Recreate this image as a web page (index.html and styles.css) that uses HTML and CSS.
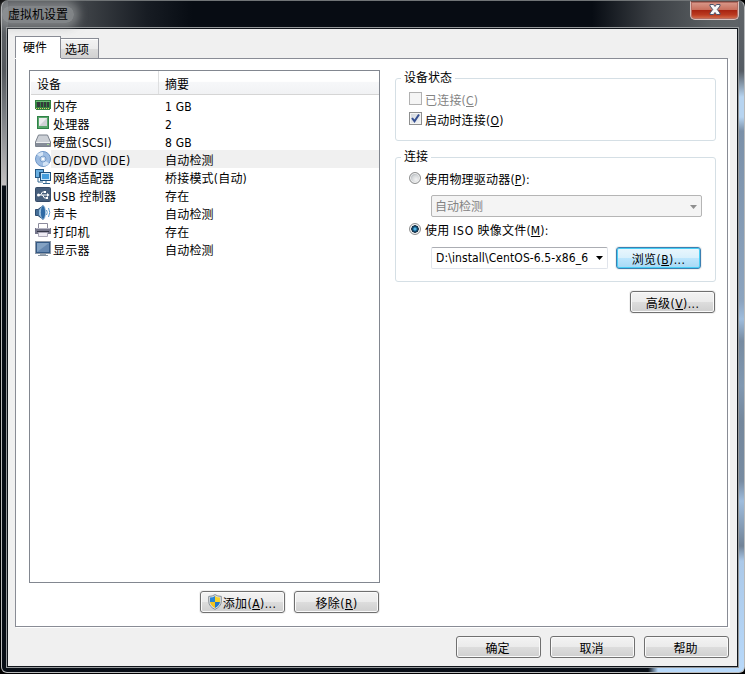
FILE: index.html
```html
<!DOCTYPE html>
<html lang="zh-CN">
<head>
<meta charset="utf-8">
<title>虚拟机设置</title>
<link rel="stylesheet" href="styles.css">
</head>
<body>
<div class="window">
  <header class="titlebar">
    <h1 class="title">虚拟机设置</h1>
    <button class="close" aria-label="关闭"><svg width="14" height="11" viewBox="0 0 14 11"><path d="M2 .5h3.500L7 2.500l1.500-2H12V2L9.300 5.500 12 9v1.500H8.500L7 8.500l-1.500 2H2V9l2.700-3.500L2 2z" fill="#f8f8f8" stroke="#4c5268" stroke-width="1"/></svg></button>
  </header>
  <main class="client">
    <nav class="tabs">
      <span class="tab active">硬件</span><span class="tab">选项</span>
    </nav>
    <section class="panel">
      <div class="hardware">
        <div class="list">
          <div class="list-head"><span class="col-name">设备</span><span class="col-sum">摘要</span></div>
          <div class="rows">
            <div class="row"><svg class="icon" viewBox="0 0 16 16"><path d="M0 3h16v9h-1v1H1v-1H0z" fill="#348342"/><path d="M1 4h14v1H1z" fill="#70ba79"/><path d="M2 5h3v5H2zm4 0h2v5H6zm3 0h2v5H9zm3 0h2v5h-2z" fill="#343a3a"/><path d="M1 11.5h14" stroke="#e1d36b" stroke-dasharray="1 1"/></svg><span class="name">内存</span><span class="sum">1 GB</span></div>
            <div class="row"><svg class="icon" viewBox="0 0 16 16"><path d="M2 1h12v13H2z" fill="#2f8247"/><path d="M3 2h10v11H3z" fill="#58a66b"/><path d="M4 3h8v8H4z" fill="#ececef"/><path d="M4 11l8-8v8z" fill="#d0d1d6"/></svg><span class="name">处理器</span><span class="sum">2</span></div>
            <div class="row"><svg class="icon" viewBox="0 0 16 16"><path d="M3.5 2h9L15.500 9v4.500H.5V9z" fill="#ccd0d6" stroke="#7b828d"/><path d="M1 9h14v4H1z" fill="#858c98"/><path d="M1 9.500h14" stroke="#eef0f2"/><path d="M12 11h2v1h-2z" fill="#a8db92"/></svg><span class="name">硬盘(SCSI)</span><span class="sum">8 GB</span></div>
            <div class="row selected"><svg class="icon" viewBox="0 0 16 16"><circle cx="8" cy="8" r="7.500" fill="#9dbce1" stroke="#6e96c7"/><path d="M8 8L2 3.500A7 7 0 0 1 8 1zM8 8l6 4.500A7 7 0 0 1 8 15z" fill="#d5e5f6"/><circle cx="8" cy="8" r="3" fill="#c3d7ed" stroke="#779dca"/><circle cx="8" cy="8" r="1.300" fill="#fff"/></svg><span class="name">CD/DVD (IDE)</span><span class="sum">自动检测</span></div>
            <div class="row"><svg class="icon" viewBox="0 0 16 16"><path d="M0 0h9v3H5v6H0z" fill="#245783"/><path d="M1 1h7v2H4v5H1z" fill="#68aee0"/><path d="M5 3h11v9H5z" fill="#1e507d"/><path d="M6 4h9v7H6z" fill="#c6e5fa"/><path d="M7 5h7v5H7z" fill="#449ddd"/><path d="M3 9v4h5M11 12v2M8 14.500h7" fill="none" stroke="#376b94"/></svg><span class="name">网络适配器</span><span class="sum">桥接模式(自动)</span></div>
            <div class="row"><svg class="icon" viewBox="0 0 16 16"><rect x=".5" y=".5" width="15" height="14" rx="1" fill="#465e7c" stroke="#354b68"/><path d="M3 8h10M5.500 8l2-3H10M7.500 8l2 3H12" fill="none" stroke="#fff"/><circle cx="3.500" cy="8" r="1.500" fill="#fff"/><path d="M12 6l2.500 2-2.500 2zM9 4h2v2H9zm2 6h2v2h-2z" fill="#fff"/></svg><span class="name">USB 控制器</span><span class="sum">存在</span></div>
            <div class="row"><svg class="icon" viewBox="0 0 16 16"><path d="M.5 4.500h2.500L8 .5v14l-5-4H.5z" fill="#456e98" stroke="#2d4d71"/><path d="M4 5l4-4v13l-4-4z" fill="#91bee0"/><ellipse cx="8" cy="7.500" rx="2.600" ry="7" fill="#2f6ba5" stroke="#a9c8e0" stroke-width=".8"/><path d="M11.500 5q1.500 2.500 0 5M13.500 3q2.500 4.500 0 9" fill="none" stroke="#5999cd"/></svg><span class="name">声卡</span><span class="sum">自动检测</span></div>
            <div class="row"><svg class="icon" viewBox="0 0 16 16"><path d="M3.500 .5h9V6h-9z" fill="#fff" stroke="#8c8b9d"/><path d="M0 5h16v6H0z" fill="#74758a"/><path d="M1 5h14v1H1z" fill="#b7b7c6"/><path d="M2 8h12v1H2z" fill="#343747"/><path d="M3.500 9.500h9v4h-9z" fill="#eeecf4" stroke="#aba8b8"/></svg><span class="name">打印机</span><span class="sum">存在</span></div>
            <div class="row"><svg class="icon" viewBox="0 0 16 16"><path d="M0 0h16v13H0z" fill="#8c98a7"/><path d="M1 1h14v11H1z" fill="#355a85"/><path d="M2 2h12v9H2z" fill="#6688b0"/><path d="M2 2h12L2 11z" fill="#83a2c3"/><path d="M5 13h6v1H5z" fill="#9ba7b3"/><path d="M3 14h10v1H3z" fill="#8794a1"/></svg><span class="name">显示器</span><span class="sum">自动检测</span></div>
          </div>
        </div>
        <div class="list-actions">
          <button class="btn"><svg class="shield" width="14" height="16" viewBox="0 0 14 16"><path d="M7 .6Q9.500 2.400 13.300 2.400V7q0 5.500-6.300 8.400Q.7 12.500.7 7V2.400Q4.500 2.400 7 .6z" fill="#dce3e9" stroke="#899096"/><path d="M7 2v6H2V3.500Q5 3.500 7 2z" fill="#2785d5"/><path d="M7 2q2 1.500 5 1.500V8H7z" fill="#f7d52c"/><path d="M2 8h5v6Q2.500 11.500 2 8z" fill="#f3c51e"/><path d="M7 8h5q-.5 3.500-5 6z" fill="#2478c7"/></svg>添加(<u>A</u>)...</button>
          <button class="btn">移除(<u>R</u>)</button>
        </div>
      </div>
      <div class="settings">
        <fieldset class="group state">
          <legend>设备状态</legend>
          <label class="option disabled"><span class="check"></span><span>已连接(<u>C</u>)</span></label>
          <label class="option"><span class="check"><svg width="11" height="11" viewBox="0 0 11 11"><path d="M2 5l2.500 3.200L9 1.500" fill="none" stroke="#354f91" stroke-width="2"/></svg></span><span>启动时连接(<u>O</u>)</span></label>
        </fieldset>
        <fieldset class="group connection">
          <legend>连接</legend>
          <label class="option"><span class="radio"></span><span>使用物理驱动器(<u>P</u>):</span></label>
          <div class="select off"><span>自动检测</span><i class="arrow"></i></div>
          <label class="option"><span class="radio on"></span><span>使用 <span class="iso">ISO</span> 映像文件(<u>M</u>):</span></label>
          <div class="path-row">
            <div class="select path"><span class="path-text">D:\install\CentOS-6.5-x86_6</span><i class="arrow"></i></div>
            <button class="btn focus">浏览(<u>B</u>)...</button>
          </div>
        </fieldset>
        <button class="btn advanced">高级(<u>V</u>)...</button>
      </div>
    </section>
    <footer class="actions">
      <button class="btn">确定</button><button class="btn">取消</button><button class="btn">帮助</button>
    </footer>
  </main>
</div>
</body>
</html>
```

FILE: styles.css
```css
* { box-sizing: border-box; }
body {
  margin: 0;
  background: #000;
  color: #000;
  font: 12px/16px "DejaVu Sans Condensed", "Noto Sans CJK SC", sans-serif;
}
.window {
  width: 744px;
  height: 673px;
  margin-left: 1px;
  padding: 1px 6px 5px;
  border: 1px solid #b8babb;
  border-top-color: #707476;
  border-radius: 7px 7px 6px 6px;
  background:
    linear-gradient(#606468 0, #555c64 70px, #b7d4f0 96px, #b7d4f0 116px, #7b90a8 130px, #8ca4bf 300px, #9fbddd 318px, #778ba1 340px, #8098b1 385px, #74879c 420px, #778ba1 480px, #9fbddd 500px, #718397 545px, #abc9e9 560px, #b8d9fa 100%) right 0 top 0 / 6px 100% no-repeat,
    linear-gradient(90deg, #080e16 0, #080e16 646px, #b8d9fa 656px) left 0 bottom 0 / 100% 6px no-repeat,
    linear-gradient(#62666a 0, #54585d 70px, #777b80 110px, #c3c0c1 184px, #080e16 185px) left 0 top 0 / 6px 100% no-repeat,
    linear-gradient(90deg, #4b4e52 0, #494d51 65px, #171c23 145px, #070c13 190px, #070c13 590px, #3b3f44 650px, #5b6063 710px, #606468 100%);
}
.titlebar { height: 26px; display: flex; justify-content: space-between; }
.title {
  margin: 4px 0 0 -6px;
  padding: 0 6px;
  height: 17px;
  font: 12px/16px "Noto Sans CJK SC", sans-serif;
  border-radius: 8px;
  background: rgba(165,168,170,.62);
  box-shadow: 0 0 8px 5px rgba(165,168,170,.55);
}
.close {
  width: 49px;
  height: 19px;
  margin: -1px -1px 0 0;
  padding: 0 0 2px;
  display: flex;
  align-items: center;
  justify-content: center;
  border: 1px solid #dac1bd;
  border-top-color: #6d4741;
  border-radius: 0 0 5px 5px;
  box-shadow: inset 0 0 0 1px #b46b60;
  background: linear-gradient(#d99a8c 0, #c9705e 45%, #a82512 50%, #ba3a20 75%, #d77452);
}
.client {
  width: 731px;
  height: 639px;
  margin-left: -1px;
  padding: 7px 7px 0;
  border: 1px solid #10151b;
  background: #f0f0f0;
  box-shadow: 0 0 0 1px #96999b;
}
.tabs { display: flex; align-items: flex-end; height: 22px; }
.tab {
  width: 38px;
  height: 20px;
  padding: 3px 0 0 4px;
  border: 1px solid #898c95;
  border-left: 0;
  border-bottom: 0;
  background: linear-gradient(#f3f3f3, #ebebeb 50%, #dcdcdc 51%, #d1d1d1);
  box-shadow: inset 0 1px #fff;
}
.tab.active {
  width: 46px;
  height: 22px;
  padding: 3px 0 0 7px;
  border-left: 1px solid #898c95;
  background: #fff;
  box-shadow: 0 1px #fff;
  z-index: 1;
}
.panel {
  width: 713px;
  height: 569px;
  padding: 11px 11px 0 13px;
  display: flex;
  justify-content: space-between;
  align-items: flex-start;
  border: 1px solid #898c95;
  background: #fff;
  box-shadow: 1px 1px #fff, 2px 1px #fff;
}
.list { width: 351px; height: 513px; border: 1px solid #828790; }
.list-head {
  height: 24px;
  margin-left: 1px;
  display: flex;
  line-height: 29px;
  border-bottom: 1px solid #d5d5d5;
  background: linear-gradient(#fff 45%, #f6f7f9 50%, #f1f2f4);
}
.col-name { width: 128px; padding-left: 6px; border-right: 1px solid #dedfe0; }
.col-sum { padding-left: 6px; }
.rows { padding: 1px 0 0 5px; }
.row { height: 18px; display: flex; line-height: 22px; white-space: nowrap; }
.icon { width: 16px; height: 16px; margin-top: 1px; }
.name { width: 112px; padding-left: 2px; letter-spacing: .25px; }
.sum { flex: 1; padding-left: 2px; letter-spacing: .2px; }
.name, .sum { height: 18px; }
.selected .name, .selected .sum { background: #f0f0f0; }
.selected .name { letter-spacing: .33px; }
.list-actions { display: flex; justify-content: flex-end; gap: 9px; padding: 8px 1px 0 0; }
.btn {
  flex: none;
  width: 85px;
  height: 22px;
  padding: 3px 0 0;
  display: flex;
  align-items: center;
  justify-content: center;
  border: 1px solid #707070;
  border-radius: 3px;
  background: linear-gradient(#f3f3f3, #ebebeb 48%, #dddddd 50%, #cfcfcf);
  box-shadow: inset 0 0 0 1px #fafafa, 0 0 0 1px #f0f0f0;
  color: #000;
  font: inherit;
  letter-spacing: .45px;
  white-space: nowrap;
}
.actions .btn { letter-spacing: 0; padding-right: 2px; }
.btn u, .option u { text-underline-offset: 1px; text-decoration-thickness: 1px; }
.shield { margin: -3px 1px 0 -1px; }
.settings { width: 321px; padding-top: 7px; display: flex; flex-direction: column; }
.group {
  min-width: 0;
  margin: 0;
  padding: 0 0 0 13px;
  border: 1px solid #d5dfe5;
  border-radius: 3px;
}
.group legend { height: 2px; margin-left: -8px; padding: 0 3px; line-height: 2px; }
.state { height: 64px; }
.connection { height: 126px; margin-top: 15px; }
.option { height: 20px; display: flex; align-items: flex-start; line-height: 18px; letter-spacing: .2px; white-space: nowrap; }
.state .option:first-of-type { margin-top: 13px; }
.connection > .option { line-height: 16px; }
.connection > .option:first-of-type { margin-top: 14px; }
.iso { letter-spacing: .8px; }
.disabled { color: #838383; }
.check {
  width: 13px;
  height: 13px;
  margin: 0 3px 0 0;
  border: 1px solid #8e8f8f;
  background: linear-gradient(135deg, #d0d5da, #f5f6f7);
  box-shadow: inset 0 0 0 1px #f4f4f4;
}
.disabled .check { border-color: #b1b1b1; background: #f5f5f5; }
.check svg { display: block; }
.radio {
  width: 12px;
  height: 12px;
  margin: 0 4px 0 0;
  border: 1px solid #8e8f8f;
  border-radius: 50%;
  background: radial-gradient(circle at 60% 65%, #f3f3f3 0, #d5d8da 45%, #b9bdc1 65%);
  box-shadow: inset 0 0 0 1px #f4f4f4;
}
.radio.on { background: radial-gradient(circle at 50% 50%, #59b6e6 0 1px, #105a86 2px, #13293e 3.500px, #e4e7e9 4px); }
.select {
  height: 22px;
  display: flex;
  align-items: center;
  justify-content: space-between;
  padding: 2px 4px 0 3px;
  border: 1px solid #e0e4eb;
  border-top-color: #abadb3;
  border-radius: 2px;
  line-height: 18px;
}
.select.off { width: 271px; margin: 3px 0 6px 22px; border-color: #b5b5b5; background: #f4f4f4; color: #838383; }
.arrow { width: 7px; height: 4px; background: #000; clip-path: polygon(0 0, 100% 0, 50% 100%); }
.off .arrow { background: #8e8e8e; }
.path-row { display: flex; margin: 4px 0 0 22px; gap: 8px; }
.path { width: 177px; padding: 0 4px; }
.path-text { letter-spacing: .1px; white-space: nowrap; }
.focus {
  border-color: #3c7fb1;
  background: linear-gradient(#eaf6fd, #d9f0fc 48%, #bee6fd 50%, #a7d9f5);
  box-shadow: inset 0 0 0 1px #48cef5, 0 0 0 1px #f0f0f0;
}
.advanced { align-self: flex-end; margin: 9px 1px 0 0; }
.actions { display: flex; justify-content: flex-end; gap: 9px; padding: 9px 1px 0 0; }
```
